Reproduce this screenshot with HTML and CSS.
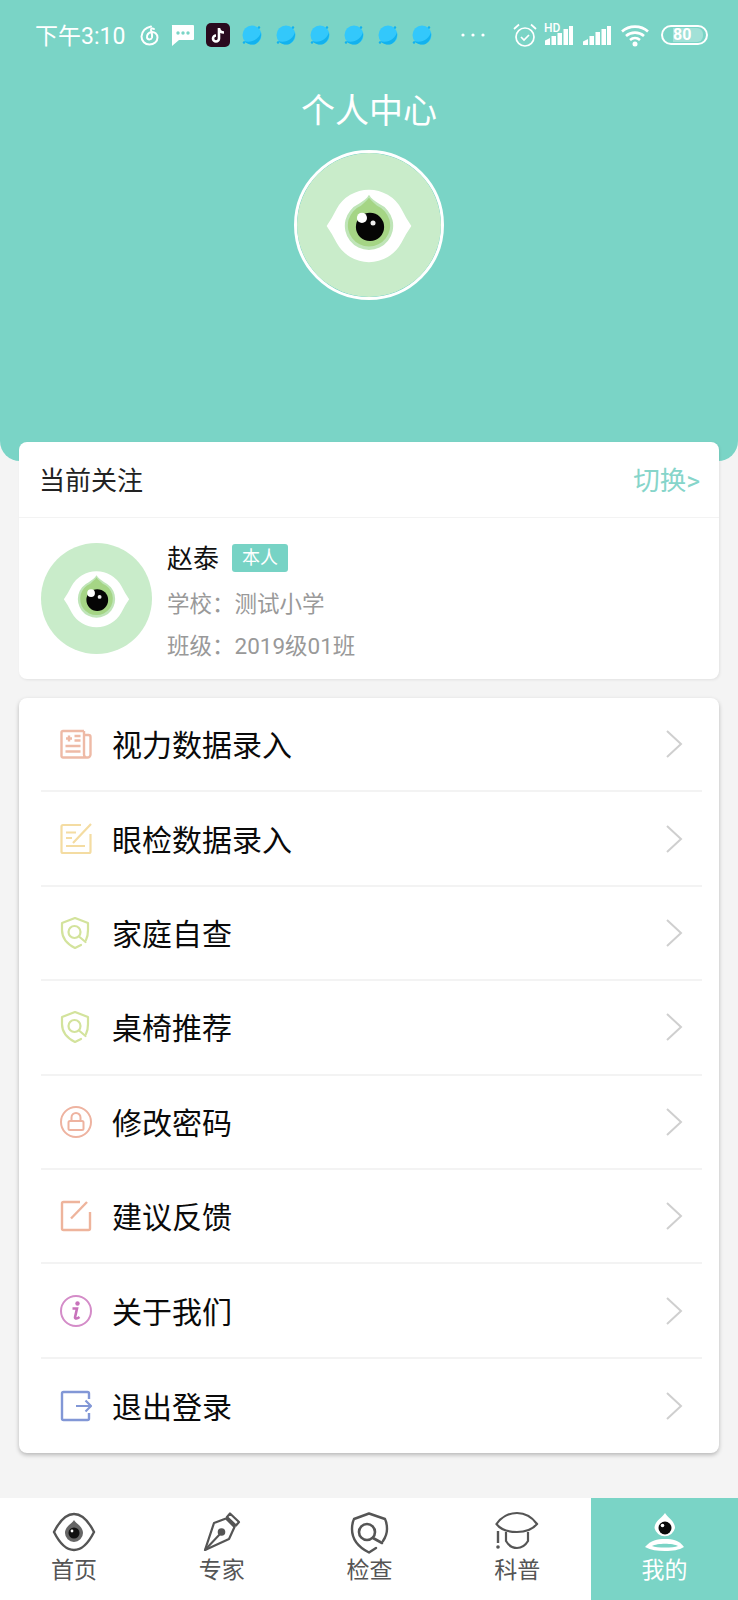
FILE: index.html
```html
<!DOCTYPE html>
<html lang="zh-CN">

<head>
    <meta charset="UTF-8">
    <meta name="viewport" content="width=device-width, initial-scale=1.0">
    <title>个人中心</title>
    <link rel="stylesheet" href="styles.css">
</head>

<body>
    <!-- shared drawings -->
    <svg class="defs" width="0" height="0">
        <symbol id="logo" viewBox="0 0 150 150">
            <circle cx="75" cy="75" r="75" fill="#c9ecca" />
            <g transform="translate(75 76) scale(1.05) translate(-75 -76)">
                <path d="M33 76Q38 69 43 59A36.500 36.500 0 0 1 107 59Q112 69 117 76Q112 83 107 93A36.500 36.500 0 0 1 43 93Q38 83 33 76Z" fill="#fff" />
                <path d="M75 45C77 49 81 51 85 54A24 24 0 1 1 65 54C69 51 73 49 75 45Z" fill="#bfe5b8" />
                <path d="M75 48C77 51 80 53 83 56A21 21 0 1 1 67 56C70 53 73 51 75 48Z" fill="#a5d585" />
                <circle cx="76" cy="77" r="14" fill="#050505" />
                <circle cx="68" cy="68" r="5" fill="#fff" />
                <circle cx="79" cy="73" r="2.5" fill="#eee" />
            </g>
        </symbol>
        <symbol id="planet" viewBox="0 0 20 20">
            <circle cx="10" cy="10" r="9.5" fill="#33c8fb" />
            <path d="M19 7C18 13 10 19 2 16C5 19 9 20 12 19.500C16 18.500 20 13 19 7Z" fill="#12b2ee" />
            <circle cx="17" cy="2.500" r="1.200" fill="#12b2ee" />
            <circle cx="2" cy="17.500" r="1.200" fill="#12b2ee" />
        </symbol>
        <symbol id="shield" viewBox="0 0 32 32">
            <path d="M21 28L15 31C7 27 2 21 2 13V6L15 1L28 6V13C28 17 27.500 20 26 23" fill="none" stroke="#d3e39c" stroke-width="2.200" stroke-linejoin="round" stroke-linecap="round" />
            <circle cx="14.500" cy="15" r="6" fill="none" stroke="#d3e39c" stroke-width="2.200" />
            <path d="M19 19.500L25.500 25" stroke="#d3e39c" stroke-width="2.200" stroke-linecap="round" />
        </symbol>
        <symbol id="chevron" viewBox="0 0 18 30">
            <path d="M2 2L16 15L2 28" fill="none" stroke="#cfcfcf" stroke-width="2" />
        </symbol>
    </svg>

    <header class="top">
        <div class="status">
            <span class="time">下午3:10</span>
            <svg width="19" height="21" viewBox="0 0 19 21">
                <path d="M11 1.500C6 2.500 2 6 1.500 11.500C1.500 16 5 19.500 9.500 19.500C14 19.500 17.500 16.500 17.500 12.500C17.500 9 14.500 6.500 11.500 7C8.500 7.500 6.500 10 7 12.500C7.500 15 11 15 12 12.500C12.500 10 11.500 7 11 5C10.800 3.500 12.500 3 14 4" fill="none" stroke="#fff" stroke-width="2" stroke-linecap="round" />
            </svg>
            <svg width="23" height="21" viewBox="0 0 23 21">
                <path d="M1 0H22A1 1 0 0 1 23 1V14A1 1 0 0 1 22 15H8L1 21V1A1 1 0 0 1 1 0Z" fill="#fff" />
                <circle cx="7" cy="8" r="1.700" fill="#7ad4c6" />
                <circle cx="12" cy="8" r="1.700" fill="#7ad4c6" />
                <circle cx="17" cy="8" r="1.700" fill="#7ad4c6" />
            </svg>
            <svg width="24" height="24" viewBox="0 0 24 24">
                <rect width="24" height="24" rx="5" fill="#2a0a1e" />
                <path d="M13 5V15.500A3 3 0 1 1 10 12.500M13 5.500C13.500 8 15.500 9.500 18 9.500" fill="none" stroke="#fff" stroke-width="2.600" />
            </svg>
            <svg class="planet" viewBox="0 0 20 20"><use href="#planet" /></svg>
            <svg class="planet" viewBox="0 0 20 20"><use href="#planet" /></svg>
            <svg class="planet" viewBox="0 0 20 20"><use href="#planet" /></svg>
            <svg class="planet" viewBox="0 0 20 20"><use href="#planet" /></svg>
            <svg class="planet" viewBox="0 0 20 20"><use href="#planet" /></svg>
            <svg class="planet" viewBox="0 0 20 20"><use href="#planet" /></svg>
            <svg class="st-dots" width="24" height="4" viewBox="0 0 24 4">
                <circle cx="2" cy="2" r="1.600" fill="#fff" />
                <circle cx="12" cy="2" r="1.600" fill="#fff" />
                <circle cx="22" cy="2" r="1.600" fill="#fff" />
            </svg>
            <div class="status-right">
                <svg class="st-alarm" width="24" height="24" viewBox="0 0 24 24">
                    <circle cx="12" cy="14" r="9" fill="none" stroke="#fff" stroke-width="1.700" />
                    <path d="M8 14L11 17L16 12M1 6L6 1.500M23 6L18 1.500" fill="none" stroke="#fff" stroke-width="1.700" />
                </svg>
                <div class="hd-signal">
                    <span class="hd">HD</span>
                    <svg width="29" height="20" viewBox="0 0 29 20">
                        <path d="M1 15.500L6 13V20H1ZM7.500 11H12V20H7.500ZM13.500 8H18V20H13.500ZM19.500 4H24V20H19.500ZM25 1H29V20H25Z" fill="#fff" />
                    </svg>
                </div>
                <svg width="28" height="20" viewBox="0 0 28 20">
                    <path d="M0 16.500L5 14V20H0ZM6.500 11H11V20H6.500ZM12.500 7H17V20H12.500ZM18.500 4H23V20H18.500ZM24 1H28V20H24Z" fill="#fff" />
                </svg>
                <svg width="29" height="23" viewBox="0 0 29 23">
                    <path d="M1 7.500C8 1 20 1 27 7.500M5 12C10 7.500 18 7.500 23 12M9 16C12 13.500 16 13.500 19 16" fill="none" stroke="#fff" stroke-width="2.600" />
                    <circle cx="14" cy="20" r="2.500" fill="#fff" />
                </svg>
                <div class="battery"><span class="battery-level">80</span></div>
            </div>
        </div>
        <h1 class="page-title">个人中心</h1>
        <svg class="avatar-big" viewBox="0 0 150 150"><use href="#logo" /></svg>
    </header>

    <section class="card follow">
        <div class="follow-head">
            <span class="follow-title">当前关注</span>
            <span class="switch">切换&gt;</span>
        </div>
        <div class="person">
            <svg class="avatar" viewBox="0 0 150 150"><use href="#logo" /></svg>
            <div class="person-info">
                <div class="person-name">赵泰<span class="tag">本人</span></div>
                <p class="person-line">学校：测试小学</p>
                <p class="person-line">班级：2019级01班</p>
            </div>
        </div>
    </section>

    <section class="card menu">
        <div class="menu-row">
            <svg class="menu-icon" viewBox="0 0 32 32">
                <path d="M24 3H3A1.500 1.500 0 0 0 1.500 4.500V28A1.500 1.500 0 0 0 3 29.500H27.500A3 3 0 0 0 30.500 26.500V9A2 2 0 0 0 28.500 7H24V26.500A3 3 0 0 0 27.500 29.500M24 3V7" fill="none" stroke="#eebaa6" stroke-width="2.400" />
                <path d="M6 10.500H12M9 7.500V13.500M14.500 8H20.500M14.500 12.500H20.500M5.500 18H20.500M5.500 23.500H20.500" fill="none" stroke="#eebaa6" stroke-width="2.400" />
            </svg>
            <span class="menu-text">视力数据录入</span>
            <svg class="chevron" viewBox="0 0 18 30"><use href="#chevron" /></svg>
        </div>
        <div class="menu-row">
            <svg class="menu-icon" viewBox="0 0 32 32">
                <path d="M21 2H3A1.500 1.500 0 0 0 1.500 3.500V28.500A1.500 1.500 0 0 0 3 30H29A1.500 1.500 0 0 0 30.500 28.500V11" fill="none" stroke="#f4dca2" stroke-width="2.200" />
                <path d="M6 9.500H16M6 15H12M6 23H25M13 20L31 1" fill="none" stroke="#f4dca2" stroke-width="2.200" />
            </svg>
            <span class="menu-text">眼检数据录入</span>
            <svg class="chevron" viewBox="0 0 18 30"><use href="#chevron" /></svg>
        </div>
        <div class="menu-row">
            <svg class="menu-icon" viewBox="0 0 32 32"><use href="#shield" /></svg>
            <span class="menu-text">家庭自查</span>
            <svg class="chevron" viewBox="0 0 18 30"><use href="#chevron" /></svg>
        </div>
        <div class="menu-row">
            <svg class="menu-icon" viewBox="0 0 32 32"><use href="#shield" /></svg>
            <span class="menu-text">桌椅推荐</span>
            <svg class="chevron" viewBox="0 0 18 30"><use href="#chevron" /></svg>
        </div>
        <div class="menu-row">
            <svg class="menu-icon" viewBox="0 0 32 32">
                <circle cx="16" cy="16" r="15" fill="none" stroke="#eeb3a0" stroke-width="2" />
                <rect x="8.500" y="15" width="15" height="9" rx="1.500" fill="none" stroke="#eeb3a0" stroke-width="2" />
                <path d="M11.500 15V11.500A4.500 4.500 0 0 1 20.500 11.500V15" fill="none" stroke="#eeb3a0" stroke-width="2" />
            </svg>
            <span class="menu-text">修改密码</span>
            <svg class="chevron" viewBox="0 0 18 30"><use href="#chevron" /></svg>
        </div>
        <div class="menu-row">
            <svg class="menu-icon" viewBox="0 0 32 32">
                <path d="M20 2H3.500A1.500 1.500 0 0 0 2 3.500V28.500A1.500 1.500 0 0 0 3.500 30H28.500A1.500 1.500 0 0 0 30 28.500V12" fill="none" stroke="#eeb49c" stroke-width="2.400" />
                <path d="M11 18.500L27 2" fill="none" stroke="#eeb49c" stroke-width="2.400" />
            </svg>
            <span class="menu-text">建议反馈</span>
            <svg class="chevron" viewBox="0 0 18 30"><use href="#chevron" /></svg>
        </div>
        <div class="menu-row">
            <svg class="menu-icon" viewBox="0 0 32 32">
                <circle cx="16" cy="16" r="15" fill="none" stroke="#d48cc8" stroke-width="2" />
                <circle cx="17.500" cy="8.500" r="2.200" fill="#c873bb" />
                <path d="M12.500 13.500H17L15 22.500C15 24 17 24 19.500 22" fill="none" stroke="#c873bb" stroke-width="2.600" />
            </svg>
            <span class="menu-text">关于我们</span>
            <svg class="chevron" viewBox="0 0 18 30"><use href="#chevron" /></svg>
        </div>
        <div class="menu-row">
            <svg class="menu-icon" viewBox="0 0 32 32">
                <path d="M29 9V3.500A1.500 1.500 0 0 0 27.500 2H3.500A1.500 1.500 0 0 0 2 3.500V28.500A1.500 1.500 0 0 0 3.500 30H27.500A1.500 1.500 0 0 0 29 28.500V23" fill="none" stroke="#8297d6" stroke-width="2.400" />
                <path d="M16 16H31M25.500 10.500L31 16L25.500 21.500" fill="none" stroke="#8297d6" stroke-width="2.200" />
            </svg>
            <span class="menu-text">退出登录</span>
            <svg class="chevron" viewBox="0 0 18 30"><use href="#chevron" /></svg>
        </div>
    </section>

    <nav class="tabs">
        <div class="tab">
            <svg class="tab-icon" viewBox="0 0 44 40">
                <path d="M2 20C6 12 12 2 22 2C32 2 38 12 42 20C38 28 32 38 22 38C12 38 6 28 2 20Z" fill="none" stroke="#555" stroke-width="2.400" />
                <path d="M22 8C23 11 31 14 31 21A9 9 0 0 1 13 21C13 14 21 11 22 8Z" fill="#666" />
                <circle cx="22" cy="21" r="5.500" fill="#111" />
                <circle cx="20" cy="19" r="1.400" fill="#fff" />
            </svg>
            <span class="tab-label">首页</span>
        </div>
        <div class="tab">
            <svg class="tab-icon" viewBox="0 0 44 40">
                <path d="M30 1.500L39 10L36 13.500L27 5ZM26 6.500L14 11L5 38L29 27L34.500 15Z" fill="none" stroke="#555" stroke-width="2.200" stroke-linejoin="round" />
                <path d="M5 38L20 22" stroke="#555" stroke-width="2" />
                <circle cx="21.500" cy="20" r="3.800" fill="#555" />
            </svg>
            <span class="tab-label">专家</span>
        </div>
        <div class="tab">
            <svg class="tab-icon" viewBox="0 0 44 40">
                <path d="M29 36L22 40.500C13 36 5 28 5 17C5 13 5.500 10 7 7L22 1.500L38 7C39.500 10 40 13 40 17C40 22 38 26 36 29" fill="none" stroke="#555" stroke-width="2.400" stroke-linejoin="round" stroke-linecap="round" />
                <circle cx="20" cy="20" r="8" fill="none" stroke="#555" stroke-width="2.600" />
                <path d="M26 26L35 31" stroke="#555" stroke-width="2.600" stroke-linecap="round" />
            </svg>
            <span class="tab-label">检查</span>
        </div>
        <div class="tab">
            <svg class="tab-icon" viewBox="0 0 44 40">
                <path d="M1.500 12C6 5 14 1 22 1C30 1 37 5 42 12C37 18 30 20 22 20C14 20 6 18 1.500 12Z" fill="none" stroke="#555" stroke-width="2.200" />
                <path d="M11 20V29C14 34 18 36 22 36C26 36 30 34 33 29V20" fill="none" stroke="#555" stroke-width="2.200" />
                <path d="M3 19V31" stroke="#555" stroke-width="2.400" />
                <circle cx="3" cy="35" r="1.800" fill="#555" />
            </svg>
            <span class="tab-label">科普</span>
        </div>
        <div class="tab tab-active">
            <svg class="tab-icon" viewBox="0 0 44 40">
                <path d="M22 1C24 5 32 9 32 16A10.500 10.500 0 0 1 11.500 16C11.500 9 20 5 22 1Z" fill="#fff" />
                <circle cx="22" cy="16" r="6.500" fill="#0a0a0a" />
                <circle cx="19.500" cy="13.500" r="1.800" fill="#fff" />
                <path d="M2 35C8 28 14 27 22 27C30 27 36 28 41 35C36 38 30 39 22 39C14 39 8 38 2 35Z" fill="#fff" />
                <path d="M9 34C14 31 30 31 35 34C30 36 14 36 9 34Z" fill="#7ad4c6" />
            </svg>
            <span class="tab-label">我的</span>
        </div>
    </nav>
</body>

</html>
```

FILE: styles.css
```css
* {
    margin: 0;
    padding: 0;
    box-sizing: border-box;
}

body {
    width: 738px;
    height: 1600px;
    background: #f4f4f4;
    font-family: Roboto, "Noto Sans CJK SC", sans-serif;
    display: flex;
    flex-direction: column;
    overflow: hidden;
}

.defs {
    position: absolute;
}

/* Header */
.top {
    height: 461px;
    flex-shrink: 0;
    background: #7ad4c6;
    border-radius: 0 0 20px 20px;
    display: flex;
    flex-direction: column;
    align-items: center;
}

.status {
    width: 100%;
    height: 70px;
    padding: 0 30px 0 35px;
    display: flex;
    align-items: center;
    gap: 12px;
    color: #fff;
}

.time {
    font-size: 23px;
    line-height: 30px;
    margin-top: 4px;
    margin-right: 3px;
}

.planet {
    width: 20px;
    height: 20px;
    margin-right: 2px;
}

.st-dots {
    margin-left: 15px;
}

.status-right {
    margin-left: auto;
    display: flex;
    align-items: center;
    gap: 10px;
}

.st-alarm {
    margin-right: -3px;
}

.hd-signal {
    position: relative;
    display: flex;
}

.hd {
    position: absolute;
    left: 0;
    top: -2px;
    font-size: 12px;
    font-weight: 500;
    line-height: 10px;
}

.battery {
    width: 47px;
    height: 20px;
    margin-left: 1px;
    border: 2px solid #fff;
    border-radius: 10px;
    padding: 1px 3px 1px 10px;
    display: flex;
}

.battery-level {
    flex: 1;
    background: rgba(255, 255, 255, 0.3);
    border-radius: 0 6px 6px 0;
    font-size: 16px;
    font-weight: 700;
    line-height: 14px;
}

.page-title {
    height: 76px;
    padding-top: 3px;
    font-size: 34px;
    font-weight: 400;
    line-height: 76px;
    color: #fff;
}

.avatar-big {
    width: 150px;
    height: 150px;
    margin-top: 4px;
    border: 3px solid #fff;
    border-radius: 50%;
}

/* Cards */
.card {
    width: 700px;
    margin-left: 19px;
    background: #fff;
    border-radius: 8px;
    flex-shrink: 0;
}

.follow {
    height: 237px;
    margin-top: -19px;
    box-shadow: 1px 1px 3px rgba(0, 0, 0, 0.08);
}

.follow-head {
    height: 76px;
    padding: 0 19px 2px 20px;
    border-bottom: 1px solid #f3f3f3;
    display: flex;
    justify-content: space-between;
    align-items: center;
}

.follow-title {
    font-size: 26px;
    color: #222;
}

.switch {
    font-size: 26.5px;
    color: #86d5ca;
}

.person {
    padding: 25px 0 0 22px;
    display: flex;
    gap: 15px;
}

.avatar {
    width: 111px;
    height: 111px;
}

.person-info {
    margin-top: -1px;
}

.person-name {
    height: 41px;
    padding-bottom: 7px;
    font-size: 26px;
    line-height: 34px;
    color: #111;
    display: flex;
    align-items: center;
}

.tag {
    width: 56px;
    height: 28px;
    margin-left: 13px;
    margin-top: -2px;
    background: #77d3c5;
    border-radius: 3px;
    font-size: 18px;
    line-height: 28px;
    text-align: center;
    color: #fff;
}

.person-line {
    height: 42px;
    font-size: 22.5px;
    line-height: 42px;
    color: #999;
}

.menu {
    margin-top: 19px;
    height: 755px;
    padding: 0 17px 0 22px;
    box-shadow: 0 2px 4px rgba(0, 0, 0, 0.25);
}

.menu-row {
    height: 94.4px;
    padding-left: 19px;
    border-bottom: 2px solid #f3f3f3;
    display: flex;
    align-items: center;
}

.menu-row:last-child {
    border-bottom: none;
}

.menu-icon {
    width: 32px;
    height: 32px;
    flex-shrink: 0;
}

.menu-text {
    margin-left: 20px;
    margin-top: -2px;
    font-size: 30px;
    color: #0a0a0a;
}

.chevron {
    width: 18px;
    height: 30px;
    margin-left: auto;
    margin-right: 19px;
}

/* Bottom tabs */
.tabs {
    margin-top: 45px;
    flex: 1;
    background: #fff;
    display: flex;
}

.tab {
    flex: 1;
    padding-top: 14px;
    display: flex;
    flex-direction: column;
    align-items: center;
    color: #555;
}

.tab-icon {
    width: 44px;
    height: 40px;
    overflow: visible;
}

.tab-label {
    margin-top: 3px;
    font-size: 23px;
    line-height: 32px;
}

.tab-active {
    flex: none;
    width: 147px;
    background: #7ad4c6;
    color: #fff;
}
```
